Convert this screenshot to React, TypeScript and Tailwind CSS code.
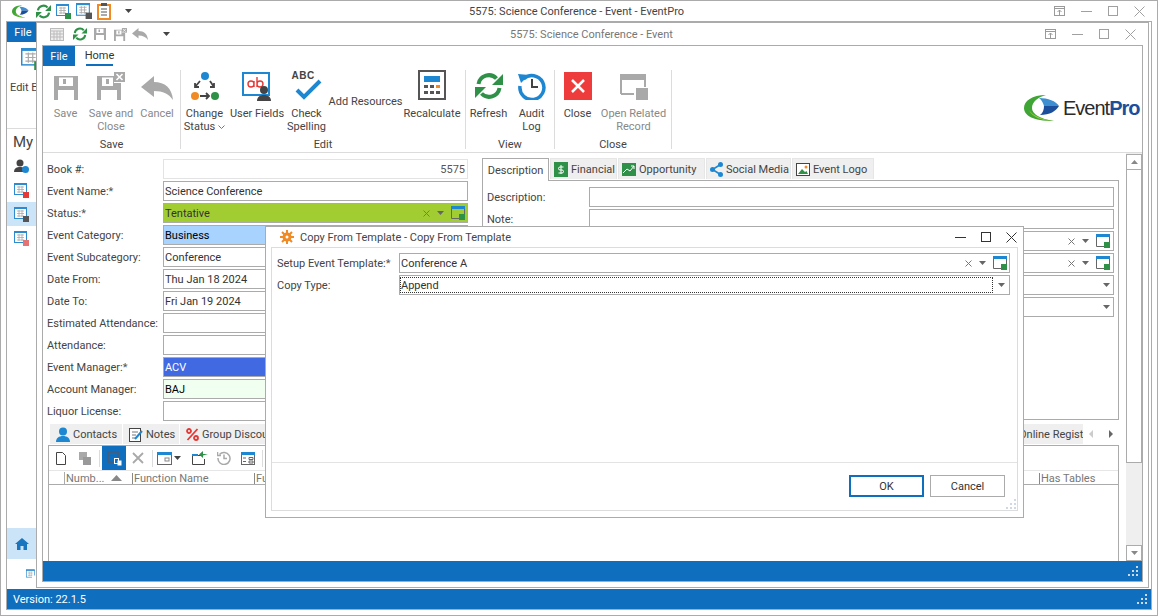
import React from "react";

const GREY = "#a9a9a9";

function Refresh({ size = 28 }: { size?: number }) {
  return (
    <svg width={size} height={size} viewBox="0 0 28 28" fill="none">
      <path d="M3.5 12 A10.5 10.5 0 0 1 21.5 6.5" stroke="#2e9147" strokeWidth="4" />
      <path d="M28 2 V13 H17 Z" fill="#2e9147" />
      <path d="M24.5 16 A10.5 10.5 0 0 1 6.5 21.5" stroke="#2e9147" strokeWidth="4" />
      <path d="M0 26 V15 H11 Z" fill="#2e9147" />
    </svg>
  );
}

function Floppy({ size = 24 }: { size?: number }) {
  return (
    <svg width={size} height={size} viewBox="0 0 24 24">
      <path fillRule="evenodd" fill={GREY} d="M0 0H24V24H0Z M5 1.500V10H19V1.500Z M4 14V24H20V14Z" />
      <rect x="9" y="3" width="3" height="5" fill={GREY} />
    </svg>
  );
}

function FloppyClose({ w = 28, h = 28 }: { w?: number; h?: number }) {
  return (
    <svg width={w} height={h} viewBox="0 0 28 28">
      <path fillRule="evenodd" fill={GREY} d="M0 4H17V11H24V28H0Z M5 5.500V14H16V5.500Z M4 18V28H20V18Z" />
      <rect x="9" y="7" width="3" height="5" fill={GREY} />
      <rect x="17" y="0" width="11" height="10" fill={GREY} />
      <path d="M19.5 2 L25.5 8 M25.5 2 L19.5 8" stroke="#fff" strokeWidth="1.6" />
    </svg>
  );
}

function Undo({ w = 32, h = 24 }: { w?: number; h?: number }) {
  return (
    <svg width={w} height={h} viewBox="0 0 32 24">
      <path fill={GREY} d="M0 11 L13 0 V6 C24 6 31 12 32 24 C28 18 22 15 13 15 V21 Z" />
    </svg>
  );
}

function Swirl({ w = 36, h = 26 }: { w?: number; h?: number }) {
  return (
    <svg width={w} height={h} viewBox="0 0 36 26">
      <path fill="#3fa535" d="M22 0 C8 0 0 6 0 13 C0 20 8 26 30 26 C16 24 8 19 8 13 C8 7 14 2 22 0 Z" />
      <path fill="#9ccc3c" d="M30 26 C18 25 8 20 5 15 C8 22 18 26 30 26 Z" />
      <path fill="#3d8fd1" d="M15 3 C24 3 32 6 35 11 L20 11 C19 8 18 5 15 3 Z" />
      <path fill="#1b4f9c" d="M35 11 C32 16 26 20 16 20 C19 18 20 14 20 11 Z" />
    </svg>
  );
}

function Clipboard() {
  return (
    <svg width="14" height="17" viewBox="0 0 14 17" fill="none">
      <rect x="1" y="2" width="12" height="14" fill="#fff" stroke="#f08a24" strokeWidth="2" />
      <rect x="4" y="0" width="6" height="3" fill="#555" />
      <path d="M4 6H10 M4 9H10 M4 12H10" stroke="#555" />
    </svg>
  );
}

// little calendar grid with a badge in the corner, used all over the app
function CalGrid({ badge = "#2e9147", w = 15, h = 15 }: { badge?: string; w?: number; h?: number }) {
  return (
    <svg width={w} height={h} viewBox="0 0 15 15" fill="none">
      <rect x="0.5" y="0.5" width="12" height="11" fill="#fff" stroke="#2d8bd0" />
      <rect x="0" y="0" width="13" height="2" fill="#2d8bd0" />
      <path d="M3 4H10 M3 6.5H10 M3 9H10 M5 3V10 M8 3V10" stroke="#aaa" strokeWidth="0.8" />
      <rect x="9" y="9" width="6" height="6" fill={badge} />
    </svg>
  );
}

function Caret({ color = "#666" }: { color?: string }) {
  return (
    <svg width="7" height="4" viewBox="0 0 7 4" className="shrink-0">
      <path d="M0 0H7L3.5 4Z" fill={color} />
    </svg>
  );
}

function Grip() {
  return (
    <svg width="11" height="11" viewBox="0 0 11 11" fill="#cfd9e6">
      <rect x="8" y="0" width="2" height="2" />
      <rect x="4" y="4" width="2" height="2" />
      <rect x="8" y="4" width="2" height="2" />
      <rect x="0" y="8" width="2" height="2" />
      <rect x="4" y="8" width="2" height="2" />
      <rect x="8" y="8" width="2" height="2" />
    </svg>
  );
}

function WinBtns({ color, gap }: { color: string; gap: string }) {
  return (
    <div className={`flex items-center ${gap}`}>
      <svg width="11" height="11" viewBox="0 0 11 11" fill="none" stroke={color}>
        <path d="M0 5.5H11" />
      </svg>
      <svg width="10" height="10" viewBox="0 0 10 10" fill="none" stroke={color}>
        <rect x="0.5" y="0.5" width="9" height="9" />
      </svg>
      <svg width="11" height="11" viewBox="0 0 11 11" fill="none" stroke={color}>
        <path d="M0.5 0.5L10.5 10.5M10.5 0.5L0.5 10.5" />
      </svg>
    </div>
  );
}

function PinBox() {
  return (
    <svg width="11" height="10" viewBox="0 0 11 10" fill="none" stroke="#9a9a9a">
      <rect x="0.5" y="0.5" width="10" height="9" />
      <path d="M0.5 2.5H10.5M5.5 9V4M3.5 6L5.5 4L7.5 6" />
    </svg>
  );
}

function OpenWin() {
  return (
    <svg width="14" height="14" viewBox="0 0 14 14" fill="none" className="shrink-0">
      <path d="M0.5 3V12.5H8M13.5 3V8" stroke="#666" />
      <rect x="0" y="0" width="14" height="3" fill="#1d87d2" />
      <rect x="8" y="8" width="6" height="6" fill="#2e9147" />
    </svg>
  );
}

function ClearX() {
  return (
    <svg width="7" height="7" viewBox="0 0 7 7" fill="none" stroke="#777" className="shrink-0">
      <path d="M0.5 0.5L6.5 6.5M6.5 0.5L0.5 6.5" />
    </svg>
  );
}

type RowProps = { label?: React.ReactNode; value?: string; cls?: string };

function FormRow({ label, value, cls = "border-[#ababab]" }: RowProps) {
  return (
    <div className="flex h-[22px] items-center">
      <div className="w-[116px] shrink-0 whitespace-nowrap">{label}</div>
      <div className={`flex h-[20px] w-[305px] items-center border px-[1px] text-[#333] ${cls}`}>{value}</div>
    </div>
  );
}

function RibbonItem({ w, icon, top = "h-[30px]", gap = "mt-[7px]", label }: { w: string; icon: React.ReactNode; top?: string; gap?: string; label: React.ReactNode }) {
  return (
    <div className={`flex flex-col items-center ${w}`}>
      <div className={`flex items-end justify-center ${top}`}>{icon}</div>
      <div className={`whitespace-nowrap text-center leading-[13px] ${gap}`}>{label}</div>
    </div>
  );
}

function Group({ w, title, children }: { w: string; title: string; children: React.ReactNode }) {
  return (
    <div className={`relative flex h-[79px] shrink-0 flex-col border-r border-[#dcdcdc] ${w}`}>
      <div className="flex flex-1">{children}</div>
      <div className="-mb-[4px] text-center leading-[16px] text-[#444]">{title}</div>
    </div>
  );
}

function BottomTab({ w, icon, label }: { w: string; icon: React.ReactNode; label: string }) {
  return (
    <div className={`mr-[1px] flex h-[20px] shrink-0 items-center gap-[3px] overflow-hidden whitespace-nowrap bg-[#efefef] pl-[6px] pt-[1px] text-[#444] ${w}`}>
      {icon}
      {label}
    </div>
  );
}

function TopTab({ w, icon, label }: { w: string; icon: React.ReactNode; label: string }) {
  return (
    <div className={`mr-[1px] flex h-[21px] shrink-0 items-center gap-[3px] whitespace-nowrap border border-b-0 border-[#e6e6e6] bg-[#efefef] pl-[3px] text-[#444] ${w}`}>
      {icon}
      <span className="pt-[1px]">{label}</span>
    </div>
  );
}

export default function App() {
  const star = <span className="text-[#555]">*</span>;
  return (
    <div className="relative h-[616px] w-[1158px] overflow-hidden border border-[#ababab] bg-white font-['Roboto',sans-serif] text-[11px] leading-none text-[#444]">
      {/* outer title bar */}
      <div className="flex h-[20px] items-center">
        <div className="ml-[11px] flex w-[457px] items-center">
          <Swirl w={17} h={13} />
          <div className="ml-[7px]"><Refresh size={15} /></div>
          <div className="ml-[5px]"><CalGrid /></div>
          <div className="ml-[5px]"><CalGrid badge="#555" w={16} h={16} /></div>
          <div className="ml-[5px]"><Clipboard /></div>
          <div className="ml-[14px]"><Caret color="#444" /></div>
        </div>
        <div className="pt-[1px]">5575: Science Conference - Event - EventPro</div>
        <div className="ml-auto mr-[12px] flex items-center gap-[16px]">
          <PinBox />
          <WinBtns color="#a0a0a0" gap="gap-[16px]" />
        </div>
      </div>

      {/* outer content frame: sidebar + version bar */}
      <div className="ml-[5px] flex h-[589px] w-[1146px] flex-col border border-[#ababab]">
        <div className="flex h-[20px] w-[32px] items-center justify-center bg-[#106ebe] text-white">File</div>
        <div className="flex w-[29px] flex-1 flex-col overflow-hidden whitespace-nowrap">
          <div className="flex h-[87px] shrink-0 flex-col border-b border-[#dcdcdc]">
            <div className="ml-[14px] mt-[6px]"><CalGrid badge="#2e9147" w={22} h={22} /></div>
            <div className="ml-[3px] mt-[12px]">Edit Event</div>
          </div>
          <div className="ml-[6px] mt-[6px] text-[15px]">My</div>
          <div className="mt-[4px] flex h-[24px] items-center pl-[7px]">
            <svg width="15" height="14" viewBox="0 0 15 14"><circle cx="6" cy="4" r="3.5" fill="#444" /><path d="M0 13C0 9 3 8 6 8S12 9 12 13Z" fill="#444" /><circle cx="11.5" cy="10.5" r="3.5" fill="#1d87d2" /></svg>
          </div>
          <div className="flex h-[24px] items-center pl-[7px]"><CalGrid badge="#e53935" /></div>
          <div className="flex h-[24px] items-center bg-[#cce4f7] pl-[7px]"><CalGrid badge="#555" /></div>
          <div className="flex h-[24px] items-center pl-[7px]"><CalGrid badge="#e57373" /></div>
          <div className="mt-auto flex h-[31px] items-center justify-center bg-[#cce4f7]">
            <svg width="14" height="12" viewBox="0 0 14 12"><path d="M7 0L14 6H12V12H8.5V8H5.500V12H2V6H0Z" fill="#1a75bf" /></svg>
          </div>
          <div className="flex h-[30px] items-center pl-[19px]"><CalGrid badge="#fff" /></div>
        </div>
        <div className="flex h-[20px] shrink-0 items-center justify-between bg-[#106ebe] pl-[6px] pr-[3px] text-white">
          Version: 22.1.5
          <Grip />
        </div>
      </div>

      {/* event window */}
      <div className="absolute left-[35px] top-[21px] flex h-[566px] w-[1113px] flex-col border border-[#ababab] bg-white">
        <div className="flex h-[22px] shrink-0 items-center">
          <div className="ml-[13px] flex w-[460px] items-center">
            <svg width="14" height="13" viewBox="0 0 14 13" fill="none" stroke="#bbb"><rect x="0.500" y="0.500" width="13" height="12" fill="#eee" /><path d="M0 3H14M4 3V13M7 3V13M10 3V13M0 6H14M0 9H14" /></svg>
            <div className="ml-[9px]"><Refresh size={14} /></div>
            <div className="ml-[7px]"><Floppy size={12} /></div>
            <div className="ml-[8px]"><FloppyClose w={13} h={13} /></div>
            <div className="ml-[5px]"><Undo w={16} h={12} /></div>
            <div className="ml-[15px]"><Caret color="#444" /></div>
          </div>
          <div className="pt-[1px] text-[#777]">5575: Science Conference - Event</div>
          <div className="ml-auto mr-[12px] flex items-center gap-[16px]">
            <PinBox />
            <WinBtns color="#a0a0a0" gap="gap-[16px]" />
          </div>
        </div>

        <div className="mx-[5px] flex h-[537px] w-[1101px] flex-col border border-[#ababab]">
          {/* ribbon tabs */}
          <div className="flex h-[20px] shrink-0">
            <div className="flex w-[32px] items-center justify-center bg-[#106ebe] text-white">File</div>
            <div className="ml-[11px] flex w-[27px] items-center justify-center border-b-2 border-[#106ebe] pt-[1px] text-[#333]">Home</div>
          </div>

          {/* ribbon */}
          <div className="relative flex h-[87px] shrink-0 border-b border-[#dcdcdc] pt-[4px]">
            <Group w="w-[138px]" title="Save">
              <div className="flex text-[#888]">
                <RibbonItem w="w-[45px]" icon={<Floppy />} label="Save" />
                <RibbonItem w="w-[46px]" icon={<FloppyClose />} label={<>Save and<br />Close</>} />
                <RibbonItem w="w-[46px]" icon={<Undo />} label="Cancel" />
              </div>
            </Group>
            <Group w="w-[285px]" title="Edit">
              <div className="flex text-[#444]">
                <RibbonItem w="w-[47px]" icon={
                  <svg width="28" height="28" viewBox="0 0 28 28" fill="none">
                    <circle cx="14" cy="4" r="4" fill="#1d87d2" />
                    <circle cx="4" cy="24" r="4" fill="#f08a24" />
                    <circle cx="24" cy="24" r="4" fill="#2e9147" />
                    <path d="M9 24H18M15 21L18 24L15 27M9 9L4 15M4 11V15H8M19 9L23 15M23 11V15H19" stroke="#444" strokeWidth="1.800" />
                  </svg>
                } label={<>Change<br /><span className="inline-flex items-center gap-[3px]">Status<svg width="7" height="4" viewBox="0 0 7 4" fill="none" stroke="#777"><path d="M0.500 0.500L3.500 3.500L6.500 0.500" /></svg></span></>} />
                <RibbonItem w="w-[58px]" top="h-[32px]" gap="mt-[5px]" icon={
                  <svg width="30" height="30" viewBox="0 0 30 30" fill="none">
                    <rect x="1" y="1" width="26" height="22" fill="#fff" stroke="#1d87d2" strokeWidth="2" />
                    <path d="M6 12a3 3 0 1 0 6 0a3 3 0 1 0-6 0M12 9V15M15 5V15M15 12a3 3 0 1 0 6 0a3 3 0 1 0-6 0" stroke="#e53935" strokeWidth="1.400" />
                    <circle cx="22" cy="18" r="4" fill="#444" />
                    <path d="M15 29C15 25 18 23 22 23S29 25 29 29Z" fill="#444" />
                  </svg>
                } label="User Fields" />
                <RibbonItem w="w-[41px]" icon={
                  <div className="relative h-[28px] w-[30px]">
                    <span className="absolute left-[0px] top-[-1px] font-['Liberation_Sans',sans-serif] text-[10px] font-bold tracking-[0.5px] text-[#444]">ABC</span>
                    <svg width="30" height="28" viewBox="0 0 30 28" fill="none" className="absolute left-0 top-0">
                      <path d="M5 18L12 25L28 9" stroke="#1d87d2" strokeWidth="4" />
                    </svg>
                  </div>
                } label={<>Check<br />Spelling</>} />
                <div className="flex w-[77px] items-center justify-center pb-[4px]"><span className="whitespace-nowrap">Add Resources</span></div>
                <RibbonItem w="w-[56px]" icon={
                  <svg width="28" height="30" viewBox="0 0 28 30" fill="none">
                    <rect x="1" y="1" width="26" height="28" fill="#fff" stroke="#555" strokeWidth="2" />
                    <rect x="6" y="6" width="16" height="6" fill="#1d87d2" />
                    <path d="M6 15h4v3H6zM12 15h4v3H12zM6 21h4v3H6zM12 21h4v3H12zM18 21h4v3H18z" fill="#555" />
                    <rect x="18" y="15" width="4" height="3" fill="#f08a24" />
                  </svg>
                } label="Recalculate" />
              </div>
            </Group>
            <Group w="w-[89px]" title="View">
              <div className="flex">
                <RibbonItem w="w-[45px]" icon={<Refresh />} label="Refresh" />
                <RibbonItem w="w-[41px]" icon={
                  <svg width="28" height="28" viewBox="0 0 28 28" fill="none">
                    <path d="M5.500 7A12 12 0 1 1 2 14" stroke="#1d87d2" strokeWidth="3.500" />
                    <path d="M0 2L11 3L3 11Z" fill="#1d87d2" />
                    <path d="M14 7V15H20" stroke="#444" strokeWidth="2" />
                  </svg>
                } label={<>Audit<br />Log</>} />
              </div>
            </Group>
            <Group w="w-[117px]" title="Close">
              <div className="flex">
                <RibbonItem w="w-[45px]" icon={
                  <svg width="28" height="28" viewBox="0 0 28 28" fill="none">
                    <rect width="28" height="28" fill="#ee3c3c" />
                    <path d="M8 8L20 20M20 8L8 20" stroke="#fff" strokeWidth="2.500" />
                  </svg>
                } label="Close" />
                <RibbonItem w="w-[67px]" icon={
                  <svg width="28" height="26" viewBox="0 0 28 26" fill="none">
                    <path d="M1 20V1H25V13" stroke={GREY} strokeWidth="2" />
                    <rect x="0" y="0" width="26" height="6" fill={GREY} />
                    <path d="M1 20H14" stroke={GREY} strokeWidth="2" />
                    <rect x="16" y="14" width="12" height="12" fill={GREY} />
                  </svg>
                } label={<span className="text-[#888]">Open Related<br />Record</span>} />
              </div>
            </Group>
            {/* logo */}
            <div className="absolute left-[981px] top-[29px] flex items-center">
              <Swirl />
              <span className="ml-[3px] font-['Liberation_Sans',sans-serif] text-[20px] tracking-[-1px] text-[#2b2b2b]">Event<span className="font-bold text-[#1b4f9c]">Pro</span></span>
            </div>
          </div>

          {/* body */}
          <div className="flex min-h-0 flex-1">
            <div className="flex w-[1083px] flex-col">
              <div className="flex h-[271px] shrink-0 pt-[5px]">
                <div className="ml-[4px] w-[421px] shrink-0">
                  <div className="flex h-[22px] items-center">
                    <div className="w-[116px] shrink-0">Book #:</div>
                    <div className="flex h-[20px] w-[305px] items-center justify-end border border-[#e3e3e3] px-[2px] text-[#555]">5575</div>
                  </div>
                  <FormRow label={<>Event Name:{star}</>} value="Science Conference" />
                  <div className="flex h-[22px] items-center">
                    <div className="w-[116px] shrink-0">Status:{star}</div>
                    <div className="flex h-[20px] w-[305px] items-center border border-[#ababab] bg-[#a2cd32] pl-[1px] pr-[2px] text-[#333]">
                      Tentative
                      <div className="ml-auto flex items-center gap-[7px]"><ClearX /><Caret /><OpenWin /></div>
                    </div>
                  </div>
                  <FormRow label="Event Category:" value="Business" cls="border-[#ababab] bg-[#a8d3ff] !text-black" />
                  <FormRow label="Event Subcategory:" value="Conference" />
                  <FormRow label="Date From:" value="Thu Jan 18 2024" />
                  <FormRow label="Date To:" value="Fri Jan 19 2024" />
                  <FormRow label="Estimated Attendance:" />
                  <FormRow label="Attendance:" />
                  <FormRow label={<>Event Manager:{star}</>} value="ACV" cls="border-[#ababab] bg-[#4169e1] !text-white" />
                  <FormRow label="Account Manager:" value="BAJ" cls="border-[#ababab] bg-[#f0fff0] !text-black" />
                  <FormRow label="Liquor License:" />
                </div>

                <div className="ml-[14px] flex w-[637px] shrink-0 flex-col">
                  <div className="relative z-10 flex h-[22px] shrink-0 items-start">
                    <div className="mr-[1px] flex h-[23px] w-[67px] shrink-0 items-center justify-center border border-b-0 border-[#ababab] bg-white text-[#444]">Description</div>
                    <TopTab w="w-[67px]" label="Financial" icon={
                      <svg width="14" height="15" viewBox="0 0 14 15"><rect width="14" height="15" fill="#2e9147" /><path d="M7 3V12M9.500 5H6a1.500 1.500 0 0 0 0 3h2a1.500 1.500 0 0 1 0 3H4.500" stroke="#fff" fill="none" /></svg>
                    } />
                    <TopTab w="w-[87px]" label="Opportunity" icon={
                      <svg width="14" height="13" viewBox="0 0 14 13"><rect width="14" height="13" fill="#2e9147" /><path d="M1 10L5 6L8 8L12 3M9 3H12V6" stroke="#fff" fill="none" /></svg>
                    } />
                    <TopTab w="w-[85px]" label="Social Media" icon={
                      <svg width="13" height="15" viewBox="0 0 13 15" fill="#1d87d2"><circle cx="10.500" cy="2.500" r="2.500" /><circle cx="2.500" cy="7.500" r="2.500" /><circle cx="10.500" cy="12.500" r="2.500" /><path d="M10.500 2.500L2.500 7.500L10.500 12.500" stroke="#1d87d2" strokeWidth="1.600" fill="none" /></svg>
                    } />
                    <TopTab w="w-[82px]" label="Event Logo" icon={
                      <svg width="14" height="13" viewBox="0 0 14 13" fill="none"><rect x="0.500" y="0.500" width="13" height="12" fill="#fff" stroke="#444" /><path d="M2 11L6 6L9 9L10.500 8L12 11Z" fill="#2e9147" /><circle cx="10" cy="4" r="1.500" fill="#f08a24" /></svg>
                    } />
                  </div>
                  <div className="flex h-[240px] flex-col border border-[#ababab] pl-[4px] pr-[4px] pt-[5px]">
                    {["Description:", "Note:", "", "", "", ""].map((label, i) => (
                      <div key={i} className="flex h-[22px] shrink-0 items-center">
                        <div className="w-[102px] shrink-0">{label}</div>
                        <div className="flex h-[20px] flex-1 items-center justify-end gap-[7px] border border-[#ababab] pr-[3px]">
                          {i >= 2 && i < 4 && <ClearX />}
                          {i >= 2 && <Caret />}
                          {i >= 2 && i < 4 && <OpenWin />}
                        </div>
                      </div>
                    ))}
                  </div>
                </div>
              </div>

              {/* bottom tabs */}
              <div className="ml-[5px] flex min-h-0 w-[1071px] flex-1 flex-col">
                <div className="flex h-[21px] shrink-0 pl-[2px]">
                  <BottomTab w="w-[72px]" label="Contacts" icon={
                    <svg width="14" height="15" viewBox="0 0 14 15" fill="#1d87d2"><circle cx="7" cy="4.500" r="4" /><path d="M0 15C0 11 3 9 7 9S14 11 14 15Z" /></svg>
                  } />
                  <BottomTab w="w-[56px]" label="Notes" icon={
                    <svg width="14" height="14" viewBox="0 0 14 14" fill="none"><rect x="0.500" y="0.500" width="11" height="13" stroke="#444" fill="#fff" /><path d="M3 4H9M3 7H7M3 10H6" stroke="#777" /><path d="M6 11L13 3" stroke="#1d87d2" strokeWidth="2" /></svg>
                  } />
                  <BottomTab w="w-[200px]" label="Group Discounts" icon={
                    <svg width="13" height="13" viewBox="0 0 13 13" fill="none" stroke="#e53935" strokeWidth="1.800"><path d="M11.500 1L1.500 12" /><circle cx="3" cy="3" r="2" /><circle cx="10" cy="10" r="2" /></svg>
                  } />
                  <div className="flex-1 bg-[#efefef]" />
                  <div className="flex h-[20px] w-[66px] shrink-0 items-center overflow-hidden whitespace-nowrap bg-[#efefef] pl-[2px] pt-[1px] text-[#444]">Online Registration</div>
                  <div className="flex w-[36px] items-start justify-between pl-[6px] pr-[6px] pt-[6px]">
                    <svg width="4" height="8" viewBox="0 0 4 8"><path d="M4 0V8L0 4Z" fill="#ccc" /></svg>
                    <svg width="4" height="8" viewBox="0 0 4 8"><path d="M0 0V8L4 4Z" fill="#666" /></svg>
                  </div>
                </div>
                <div className="flex min-h-0 flex-1 flex-col border border-b-0 border-[#ababab]">
                  <div className="flex h-[24px] shrink-0 items-center">
                    <div className="flex h-full w-[24px] items-center justify-center">
                      <svg width="10" height="13" viewBox="0 0 10 13" fill="#fff" stroke="#444"><path d="M0.500 0.500H6.500L9.500 3.500V12.500H0.500Z" /></svg>
                    </div>
                    <div className="flex h-full w-[24px] items-center justify-center">
                      <svg width="12" height="13" viewBox="0 0 12 13" fill={GREY}><rect width="8" height="8" /><rect x="4" y="5" width="8" height="8" fill="#999" /></svg>
                    </div>
                    <div className="mx-[2px] h-[17px] w-px bg-[#dcdcdc]" />
                    <div className="flex h-full w-[24px] items-center justify-center bg-[#106ebe]">
                      <svg width="15" height="15" viewBox="0 0 15 15" fill="none"><rect x="1" y="1" width="10" height="10" stroke="#3b5f85" strokeWidth="2" /><rect x="1" y="4" width="10" height="1" fill="#3b5f85" /><rect x="7.500" y="7.500" width="4" height="5" fill="#106ebe" stroke="#fff" /><rect x="10.500" y="9.500" width="4" height="5" fill="#fff" /></svg>
                    </div>
                    <div className="flex h-full w-[24px] items-center justify-center">
                      <svg width="12" height="12" viewBox="0 0 12 12" fill="none" stroke={GREY} strokeWidth="1.800"><path d="M1 1L11 11M11 1L1 11" /></svg>
                    </div>
                    <div className="mx-[2px] h-[17px] w-px bg-[#dcdcdc]" />
                    <div className="flex h-full w-[30px] items-center justify-end gap-[2px] pr-[4px]">
                      <svg width="15" height="13" viewBox="0 0 15 13" fill="none"><rect x="0.500" y="0.500" width="14" height="12" stroke="#666" /><rect width="15" height="3" fill="#1d87d2" /><rect x="8" y="6" width="4" height="3" stroke="#888" /></svg>
                      <Caret color="#444" />
                    </div>
                    <div className="flex h-full w-[29px] items-center justify-center">
                      <svg width="16" height="14" viewBox="0 0 16 14" fill="none"><path d="M0.500 4.500H10M0.500 4.500V13.500H12.500V8" stroke="#444" /><rect y="3" width="6" height="2" fill="#1d87d2" /><path d="M16 3H11V0L7 3.500L11 7V4.500" fill="#2e9147" /></svg>
                    </div>
                    <div className="flex h-full w-[20px] items-center justify-center">
                      <svg width="14" height="14" viewBox="0 0 14 14" fill="none" stroke={GREY} strokeWidth="1.500"><path d="M2.500 3.500A6 6 0 1 1 1 7" /><path d="M7 3.500V7.500H10" /><path d="M0.500 1V4.500H4" /></svg>
                    </div>
                    <div className="flex h-full w-[28px] items-center justify-center">
                      <svg width="14" height="13" viewBox="0 0 14 13" fill="none" stroke="#666"><rect x="0.500" y="0.500" width="13" height="12" /><rect width="14" height="3" fill="#1d87d2" stroke="none" /><path d="M2 6H5M2 9.500H5M8 5.500H12V7.500H8ZM8 9H12V11H8Z" /></svg>
                    </div>
                    <div className="h-[17px] w-px bg-[#dcdcdc]" />
                  </div>
                  <div className="flex h-[15px] shrink-0 items-center border-y border-y-[#ababab] border-t-[#e6e6e6] pt-[1px] text-[#777]">
                    <div className="h-full w-[16px] border-r border-[#ababab]" />
                    <div className="flex w-[67px] items-center pl-[1px]">
                      Numb...
                      <svg width="11" height="6" viewBox="0 0 11 6" className="ml-[7px]"><path d="M5.500 0L11 6H0Z" fill="#888" /></svg>
                    </div>
                    <div className="w-[122px] border-l border-[#888] pl-[1px]">Function Name</div>
                    <div className="w-[785px] overflow-hidden whitespace-nowrap border-l border-[#888] pl-[1px]">Function</div>
                    <div className="border-l border-[#888] pl-[1px]">Has Tables</div>
                  </div>
                </div>
              </div>
            </div>

            {/* window scrollbar */}
            <div className="flex w-[16px] flex-col bg-[#efefef] pt-[1px]">
              <div className="flex h-[16px] items-center justify-center border border-[#ababab] bg-white">
                <svg width="7" height="4" viewBox="0 0 7 4"><path d="M3.500 0L7 4H0Z" fill="#888" /></svg>
              </div>
              <div className="h-[293px] border border-t-0 border-[#ababab] bg-white" />
              <div className="mt-auto flex h-[16px] items-center justify-center border border-[#ababab] bg-white"><Caret color="#888" /></div>
            </div>
          </div>

          <div className="flex h-[20px] shrink-0 items-center justify-end bg-[#106ebe] pr-[3px]"><Grip /></div>
        </div>
      </div>

      {/* copy from template dialog */}
      <div className="absolute left-[264px] top-[225px] flex h-[292px] w-[759px] flex-col border border-[#ababab] bg-white px-[5px] pb-[6px] text-[#444]">
        <div className="flex h-[20px] shrink-0 items-center">
          <svg width="14" height="14" viewBox="0 0 14 14" className="ml-[9px]" fill="#f08a24">
            <circle cx="7" cy="7" r="4.500" />
            <path d="M7 0V14M0 7H14M2 2L12 12M12 2L2 12" stroke="#f08a24" strokeWidth="2" />
            <circle cx="7" cy="7" r="1.500" fill="#fff" />
          </svg>
          <div className="ml-[6px]">Copy From Template - Copy From Template</div>
          <div className="ml-auto mr-[1px]"><WinBtns color="#333" gap="gap-[15px]" /></div>
        </div>
        <div className="flex flex-1 flex-col border border-[#dcdcdc] pt-[4px]">
          <div className="flex h-[22px] shrink-0 items-center pl-[5px] pr-[7px]">
            <div className="w-[122px] shrink-0 whitespace-nowrap">Setup Event Template:{star}</div>
            <div className="flex h-[20px] flex-1 items-center border border-[#ababab] pl-[1px] pr-[2px] text-[#333]">
              Conference A
              <div className="ml-auto flex items-center gap-[7px]"><ClearX /><Caret /><OpenWin /></div>
            </div>
          </div>
          <div className="flex h-[22px] shrink-0 items-center pl-[5px] pr-[7px]">
            <div className="w-[122px] shrink-0">Copy Type:</div>
            <div className="flex h-[20px] flex-1 items-center border border-[#ababab] pl-[0px] pr-[4px] text-[#333]">
              <div className="flex h-[16px] flex-1 items-center border border-dotted border-[#333] pl-[0px]">Append</div>
              <div className="ml-[5px]"><Caret /></div>
            </div>
          </div>
          <div className="flex-1" />
          <div className="relative flex h-[48px] shrink-0 items-start justify-end gap-[6px] border-t border-[#e3e3e3] pr-[12px] pt-[12px]">
            <div className="flex h-[22px] w-[75px] items-center justify-center border-2 border-[#106ebe] text-[#333]">OK</div>
            <div className="flex h-[22px] w-[75px] items-center justify-center border border-[#ababab] text-[#333]">Cancel</div>
            <div className="absolute bottom-0 right-0"><Grip /></div>
          </div>
        </div>
      </div>
    </div>
  );
}
